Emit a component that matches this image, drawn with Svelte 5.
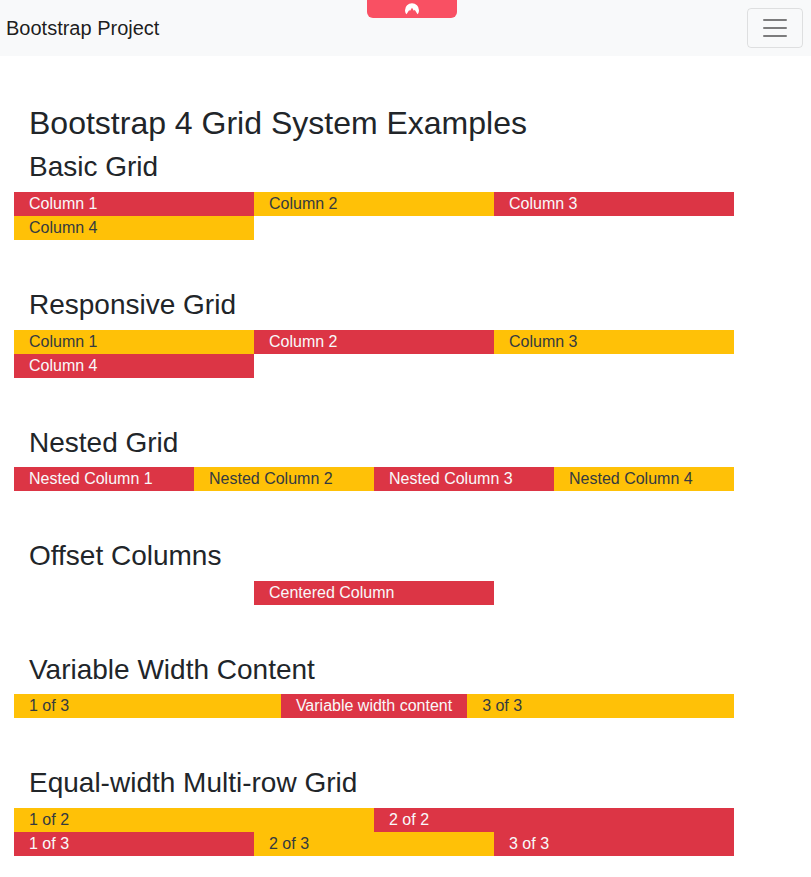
<script>
  const sections = [
    { title: 'Basic Grid', rows: [[['Column 1', 'red', 4], ['Column 2', 'yellow', 4], ['Column 3', 'red', 4], ['Column 4', 'yellow', 4]]] },
    { title: 'Responsive Grid', rows: [[['Column 1', 'yellow', 4], ['Column 2', 'red', 4], ['Column 3', 'yellow', 4], ['Column 4', 'red', 4]]] },
    { title: 'Nested Grid', rows: [[['Nested Column 1', 'red', 3], ['Nested Column 2', 'yellow', 3], ['Nested Column 3', 'red', 3], ['Nested Column 4', 'yellow', 3]]] },
    { title: 'Offset Columns', rows: [[['Centered Column', 'red', 4, 'offset']]] },
    { title: 'Variable Width Content', rows: [[['1 of 3', 'yellow', 'fill'], ['Variable width content', 'red', 'auto'], ['3 of 3', 'yellow', 'fill']]] },
    { title: 'Equal-width Multi-row Grid', rows: [[['1 of 2', 'yellow', 'fill'], ['2 of 2', 'red', 'fill']], [['1 of 3', 'red', 'fill'], ['2 of 3', 'yellow', 'fill'], ['3 of 3', 'red', 'fill']]] }
  ];
</script>

<nav class="navbar">
  <a class="brand" href="#top">Bootstrap Project</a>
  <button class="toggler" aria-label="Toggle navigation">
    <svg viewBox="0 0 30 30" width="30" height="30">
      <path stroke="rgba(0,0,0,.5)" stroke-width="2" stroke-linecap="round" stroke-miterlimit="10" d="M4 7h22M4 15h22M4 23h22" />
    </svg>
  </button>
</nav>

<div class="badge">
  <svg viewBox="0 0 14 12" width="14" height="12">
    <path fill="#fff" d="M1.5 11.3C.5 10.1 0 8.7 0 7.2A7 6.9 0 0 1 14 7.2C14 8.7 13.5 10.1 12.5 11.3L9.7 6.7 9 7.8 9.3 8.4 7 4.8 4.8 8.3 4.4 6.7Z" />
  </svg>
</div>

<main class="container">
  <h2>Bootstrap 4 Grid System Examples</h2>
  {#each sections as section}
    <section>
      <h3>{section.title}</h3>
      {#each section.rows as row}
        <div class="row">
          {#each row as [label, color, size, offset]}
            <div class="col col-{size} {color} {offset ?? ''}">{label}</div>
          {/each}
        </div>
      {/each}
    </section>
  {/each}
</main>

<style>
  :global(body) {
    margin: 0;
    background: #fff;
    color: #212529;
    font: 16px/1.5 "Liberation Sans", Arial, sans-serif;
    overflow: hidden;
  }
  .navbar {
    display: flex;
    align-items: center;
    justify-content: space-between;
    box-sizing: border-box;
    height: 56px;
    padding: 8px 8px 8px 6px;
    background: #f8f9fa;
  }
  .brand {
    font-size: 20px;
    line-height: 30px;
    color: rgba(0, 0, 0, 0.9);
    text-decoration: none;
  }
  .toggler {
    display: flex;
    align-items: center;
    justify-content: center;
    box-sizing: border-box;
    width: 56px;
    height: 40px;
    padding: 0;
    border: 1px solid rgba(0, 0, 0, 0.1);
    border-radius: 4px;
    background: transparent;
  }
  .badge {
    position: absolute;
    top: 0;
    left: 367px;
    width: 90px;
    height: 18px;
    border-radius: 0 0 6px 6px;
    background: #f95063;
    display: flex;
    justify-content: center;
  }
  .badge svg {
    margin-top: 3px;
    overflow: visible;
  }
  .container {
    width: 720px;
    margin: 48px 0 0 14px;
  }
  h2, h3 {
    margin: 0 0 8px;
    padding-left: 15px;
    font-weight: 500;
    line-height: 1.2;
  }
  h2 { font-size: 32px; }
  h3 { font-size: 28px; }
  section { margin-bottom: 48px; }
  .row {
    display: flex;
    flex-wrap: wrap;
  }
  .col {
    box-sizing: border-box;
    padding: 0 15px;
  }
  .col-4 { flex: 0 0 33.333333%; }
  .col-3 { flex: 0 0 25%; }
  .col-fill { flex: 1 0 0; }
  .col-auto { flex: 0 0 auto; }
  .offset { margin-left: 33.333333%; }
  .red {
    background: #dc3545;
    color: #f8f9fa;
  }
  .yellow {
    background: #ffc107;
    color: #343a40;
  }
</style>
